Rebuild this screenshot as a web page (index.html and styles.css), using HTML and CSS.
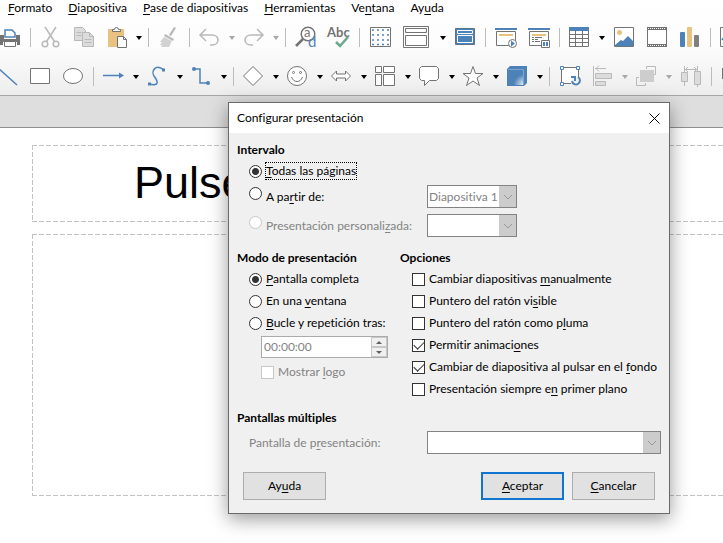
FILE: index.html
```
<!DOCTYPE html>
<html lang="es">
    <head>
        <meta charset="utf-8">
        <title>Configurar presentación</title>
        <link rel="stylesheet" href="styles.css">
    </head>
    <body>
    <header id="bars">
        <nav id="menubar">
            <a href="#"><u>F</u>ormato</a>
            <a href="#"><u>D</u>iapositiva</a>
            <a href="#"><u>P</u>ase de diapositivas</a>
            <a href="#"><u>H</u>erramientas</a>
            <a href="#">Ve<u>n</u>tana</a>
            <a href="#">Ay<u>u</u>da</a>
        </nav>
        <div id="toolbar-standard" class="toolbar">
            <button class="tool" aria-label="Imprimir"><svg viewBox="0 0 23 23"><path fill="#737373" d="M2 9h4v4h12V9h4v10h-3v-3H5v3H2z"/><path fill="#fff" stroke="#737373" d="M6.500 15.500h11v5h-11z"/><path fill="#fff" stroke="#4d82b8" stroke-width="1.500" d="M7 11V4h7l3 3v4z"/></svg></button>
            <span class="sep"></span>
            <button class="tool" aria-label="Cortar"><svg viewBox="0 0 23 23"><g fill="none" stroke="#b9b9b9" stroke-width="1.500"><path d="M6 1l9.500 14.500M17 1L7.500 15.500"/><circle cx="6" cy="18" r="2.800"/><circle cx="17" cy="18" r="2.800"/></g></svg></button>
            <button class="tool" aria-label="Copiar"><svg viewBox="0 0 23 23"><g fill="#dcdcdc" stroke="#b9b9b9"><path d="M2.500 1.500h8l3 3v10h-11z"/><path d="M10.500 6.500h7l4 4v10h-11z"/><path fill="none" d="M17.500 6.500v4h4M4.500 6.500h5M4.500 9.500h5M12.500 13.500h7M12.500 16.500h7"/></g></svg></button>
            <button class="tool" aria-label="Pegar"><svg viewBox="0 0 23 23"><path fill="#e8c27e" d="M3 3h16v18H3z"/><path fill="#fff" stroke="#737373" d="M7.500 5.500v-2h2a2 2 0 0 1 4 0h2v2z"/><path fill="#fff" stroke="#737373" d="M12.500 10.500h6l3 3v8h-9zM18.500 10.500v3h3"/></svg></button>
            <button class="drop" aria-label="Más"></button>
            <span class="sep"></span>
            <button class="tool" aria-label="Clonar formato"><svg viewBox="0 0 23 23"><path fill="#b9b9b9" d="M17 1l2 1-5 8-2-1zM8 8l9 5-1 2-9-5z"/><path fill="#d2d2d2" d="M7 11l8 4-3 6H4l1-2H3l2-3H3z"/></svg></button>
            <span class="sep"></span>
            <button class="tool" aria-label="Deshacer"><svg viewBox="0 0 23 23"><path fill="none" stroke="#b9b9b9" stroke-width="1.500" d="M8 3L2 9l6 6M2 9h12c8 0 8 10 0 10h-2"/></svg></button>
            <button class="drop off" aria-label="Más"></button>
            <button class="tool" aria-label="Rehacer"><svg viewBox="0 0 23 23"><path fill="none" stroke="#b9b9b9" stroke-width="1.500" d="M15 3l6 6-6 6M21 9H9c-8 0-8 10 0 10h2"/></svg></button>
            <button class="drop off" aria-label="Más"></button>
            <span class="sep"></span>
            <button class="tool" aria-label="Buscar y reemplazar"><svg viewBox="0 0 23 23"><circle cx="14" cy="8" r="6.800" fill="#fff" stroke="#737373" stroke-width="1.500"/><path stroke="#737373" stroke-width="2.500" d="M9 13l-7 7"/><text x="10" y="11" font-size="13" fill="#737373">a</text><text x="14" y="21" font-size="15" fill="#4d82b8">d</text></svg></button>
            <button class="tool" aria-label="Ortografía"><svg viewBox="0 0 23 23"><text x="0" y="11" font-size="13" font-weight="bold" fill="#737373">Abc</text><path fill="none" stroke="#69a78e" stroke-width="2.500" d="M9 16l4 4 8-9"/></svg></button>
            <span class="sep"></span>
            <button class="tool" aria-label="Cuadrícula"><svg viewBox="0 0 23 23"><path fill="#fff" stroke="#737373" d="M2.500 1.500h20v19h-20z"/><path stroke="#4d82b8" stroke-width="1.500" stroke-dasharray="2 3" d="M4 4h18M4 9h18M4 14h18M4 18.500h18"/></svg></button>
            <button class="tool wide" aria-label="Vistas"><svg viewBox="0 0 27 23"><path fill="#fff" stroke="#737373" d="M.5.500h25v21H.5zM2.500 2.500h21v4h-21zM2.500 9.500h21v10h-21z"/></svg></button>
            <button class="drop" aria-label="Más"></button>
            <button class="tool" aria-label="Patrón"><svg viewBox="0 0 23 23"><path fill="#4d82b8" stroke="#5f7286" d="M2.500 2.500h19v16h-19z"/><path fill="#4d82b8" stroke="#fff" d="M4.500 4.500h15v3h-15zM4.500 9.500h15v7h-15z"/></svg></button>
            <span class="sep"></span>
            <button class="tool" aria-label="Iniciar desde la primera"><svg viewBox="0 0 23 23"><path fill="#4d82b8" d="M1 2h22v2H1z"/><path fill="#fff" stroke="#737373" d="M2.500 5.500h19v14h-19z"/><path fill="#e8c27e" d="M5 8h14v2H5z"/><circle cx="18.500" cy="17.500" r="4" fill="#fff" stroke="#737373"/><path fill="#4d82b8" d="M17 14.500l4 3-4 3z"/></svg></button>
            <button class="tool" aria-label="Iniciar desde la actual"><svg viewBox="0 0 23 23"><path fill="#4d82b8" d="M1 2h22v2H1z"/><path fill="#fff" stroke="#737373" d="M2.500 5.500h19v14h-19z"/><path fill="#e8c27e" d="M5 8h14v2H5z"/><path stroke="#737373" stroke-dasharray="2 1 7 2" d="M5 11.500h10M5 13.500h6M5 15.500h8"/><path fill="#fff" stroke="#737373" d="M14.500 14.500h8v7h-8z"/><path fill="#4d82b8" d="M16 16h2v4h-2zM19 16h2v4h-2z"/></svg></button>
            <span class="sep"></span>
            <button class="tool" aria-label="Tabla"><svg viewBox="0 0 23 23"><path fill="#fff" stroke="#737373" d="M1.500 1.500h19v19h-19zM1.500 8.500h19M1.500 12.500h19M1.500 16.500h19M7.500 5v15M14.500 5v15"/><path fill="#4d82b8" d="M1 1h20v4H1z"/></svg></button>
            <button class="drop" aria-label="Más"></button>
            <button class="tool" aria-label="Imagen"><svg viewBox="0 0 23 23"><path fill="#fff" stroke="#737373" d="M2.500 1.500h19v19h-19z"/><circle cx="7.500" cy="6.500" r="2.500" fill="#e8c27e"/><path fill="#4d82b8" d="M3 19l6-5 2 1 5-5 5 5v5H3z"/></svg></button>
            <button class="tool" aria-label="Multimedia"><svg viewBox="0 0 23 23"><path fill="#fff" stroke="#737373" d="M2.500 1.500h19v19h-19z"/><path stroke="#737373" stroke-width="3" d="M2 2.500h20M2 19.500h20"/><path stroke="#fff" stroke-dasharray="1 1" d="M3 2.500h18M3 19.500h18"/></svg></button>
            <button class="tool" aria-label="Gráfico"><svg viewBox="0 0 23 23"><rect x="2" y="6" width="5" height="15" rx="1" fill="#4d82b8"/><rect x="9" y="1" width="5" height="20" rx="1" fill="#e8c27e"/><rect x="16" y="9" width="5" height="12" rx="1" fill="#808080"/></svg></button>
            <span class="sep"></span>
            <button class="tool" aria-label="Cuadro de texto"><svg viewBox="0 0 23 23"><path fill="#fff" stroke="#737373" d="M1.500 1.500h19v19h-19z"/><path stroke="#4d82b8" stroke-width="2" d="M3 14l4-5"/></svg></button>
        </div>
        <div id="toolbar-drawing" class="toolbar">
            <button class="tool" aria-label="Línea"><svg viewBox="0 0 23 23"><path stroke="#4d82b8" stroke-width="1.500" d="M2 2l20 18"/></svg></button>
            <button class="tool" aria-label="Rectángulo"><svg viewBox="0 0 23 23"><path fill="#fff" stroke="#737373" d="M2.500 3.500h19v15h-19z"/></svg></button>
            <button class="tool" aria-label="Elipse"><svg viewBox="0 0 23 23"><ellipse cx="12" cy="11" rx="9.500" ry="7.500" fill="#fff" stroke="#737373"/></svg></button>
            <span class="sep"></span>
            <button class="tool" aria-label="Flecha"><svg viewBox="0 0 23 23"><path stroke="#4d82b8" stroke-width="1.500" d="M1 10.500h18"/><path fill="#4d82b8" d="M17 7.500l5 3-5 3z"/></svg></button>
            <button class="drop" aria-label="Más"></button>
            <button class="tool" aria-label="Curva"><svg viewBox="0 0 23 23"><path fill="none" stroke="#4d82b8" stroke-width="1.500" d="M3 19c12 3 8-4 5-8S9-2 18 5"/><path fill="#4d82b8" d="M2 17.500h3v3H2zM16 3.500h3v3h-3z"/></svg></button>
            <button class="drop" aria-label="Más"></button>
            <button class="tool" aria-label="Conector"><svg viewBox="0 0 23 23"><path fill="none" stroke="#4d82b8" stroke-width="1.500" d="M4 4h6v14h8"/><circle cx="4" cy="4" r="2" fill="#4d82b8"/><circle cx="18" cy="18" r="2" fill="#4d82b8"/></svg></button>
            <button class="drop" aria-label="Más"></button>
            <span class="sep"></span>
            <button class="tool" aria-label="Formas básicas"><svg viewBox="0 0 23 23"><path fill="#fff" stroke="#737373" d="M11 1.500l9.500 9.500-9.500 9.500L1.500 11z"/></svg></button>
            <button class="drop" aria-label="Más"></button>
            <button class="tool" aria-label="Símbolos"><svg viewBox="0 0 23 23"><g fill="#fff" stroke="#737373"><circle cx="11" cy="11" r="9.500"/><circle cx="7.500" cy="7.500" r="1"/><circle cx="14.500" cy="7.500" r="1"/><path d="M5.500 12c2 6 9 6 11 0"/></g></svg></button>
            <button class="drop" aria-label="Más"></button>
            <button class="tool" aria-label="Flechas de bloque"><svg viewBox="0 0 23 23"><path fill="#fff" stroke="#737373" d="M1.500 11l5-5v3h9V6l5 5-5 5v-3h-9v3z"/></svg></button>
            <button class="drop" aria-label="Más"></button>
            <button class="tool" aria-label="Diagrama de flujo"><svg viewBox="0 0 23 23"><path fill="#fff" stroke="#737373" d="M1.500 1.500h6v6h-6zM9.500 1.500h11v6h-11zM1.500 9.500h6v11h-6zM9.500 9.500h11v11h-11z"/></svg></button>
            <button class="drop" aria-label="Más"></button>
            <button class="tool" aria-label="Llamadas"><svg viewBox="0 0 23 23"><path fill="#fff" stroke="#737373" d="M3.500 1.500h15l2 2v10l-2 2h-7l-5 5v-5h-3l-2-2v-10z"/></svg></button>
            <button class="drop" aria-label="Más"></button>
            <button class="tool" aria-label="Estrellas"><svg viewBox="0 0 23 23"><path fill="#fff" stroke="#737373" d="M11 1.500l2.500 7h7.500l-6 4.500 2.500 7.500-6.500-4.500-6.500 4.500L7 13 1 8.500h7.500z"/></svg></button>
            <button class="drop" aria-label="Más"></button>
            <button class="tool" aria-label="Objetos 3D"><svg viewBox="0 0 23 23"><defs><radialGradient id="shine" cx="1" cy="1" r=".7"><stop offset="0" stop-color="#eef3f8"/><stop offset="1" stop-color="#4d82b8"/></radialGradient></defs><path fill="#4d82b8" d="M1 4l3-3h17v17l-3 3H1z"/><path fill="url(#shine)" d="M3 5h15v15H3z"/><path fill="none" stroke="#7fa5cc" d="M2 4.500h15.500V20"/></svg></button>
            <button class="drop" aria-label="Más"></button>
            <span class="sep"></span>
            <button class="tool" aria-label="Girar"><svg viewBox="0 0 23 23"><path fill="#fff" stroke="#737373" d="M3.500 2.500h17v16h-17z"/><g fill="#fff" stroke="#4d82b8"><path d="M2.500 1.500h3v3h-3zM18.500 1.500h3v3h-3zM2.500 17.500h3v3h-3z"/></g><path stroke="#f4f4f4" stroke-width="9" d="M13 16.500h10"/><path fill="none" stroke="#4d82b8" stroke-width="2" d="M20 12a4 4 0 1 1-6 4M13 12h4v4"/></svg></button>
            <button class="tool" aria-label="Alinear"><svg viewBox="0 0 23 23"><g fill="#dcdcdc" stroke="#b9b9b9"><path d="M2.500 1v20M4.500 8.500h16v5h-16zM4.500 16.500h10v4h-10z"/><path fill="none" d="M15 3.500H4M8 .5l-3 3 3 3"/></g></svg></button>
            <button class="drop off" aria-label="Más"></button>
            <button class="tool" aria-label="Organizar"><svg viewBox="0 0 23 23"><path fill="#cdcdcd" d="M5 5h14v12H5z"/><path fill="none" stroke="#b9b9b9" d="M11.500 4V1.500h9v8H19M4 12.500H1.500v8h9V18"/></svg></button>
            <button class="drop off" aria-label="Más"></button>
            <button class="tool" aria-label="Distribuir"><svg viewBox="0 0 23 23"><g fill="#dcdcdc" stroke="#b9b9b9"><path d="M2.500 7.500h6v9h-6zM15.500 6.500h6v13h-6zM5.500 1v6M5.500 17v4M18.500 1v5M18.500 20v2"/><path fill="none" d="M6 4.500h12M9 2L6.500 4.500 9 7M15 2l2.500 2.500L15 7"/></g></svg></button>
            <span class="sep"></span>
            <button class="tool" aria-label="Sombra"><svg viewBox="0 0 23 23"><path fill="#737373" d="M2 3h16v11H2z"/></svg></button>
        </div>
    </header>
    <div id="ruler"></div>
    <main id="slide">
        <div class="frame frame-title">Pulse</div>
        <div class="frame frame-content"></div>
    </main>

    <div id="dialog" role="dialog" aria-labelledby="dialog-title">
        <div class="titlebar">
            <span id="dialog-title">Configurar presentación</span>
            <button class="close" aria-label="Cerrar"><svg width="11" height="11" viewBox="0 0 11 11"><path stroke="#000" d="M.5.500l10 10M10.500.500l-10 10"/></svg></button>
        </div>
        <form class="dialog-body" action="javascript:void(0);">
            <h2>Intervalo</h2>
            <div class="row">
                <input type="radio" name="range" id="all" checked>
                <label for="all" class="focused"><u>T</u>odas las páginas</label>
            </div>
            <div class="row tall">
                <input type="radio" name="range" id="from">
                <label for="from">A pa<u>r</u>tir de:</label>
                <span class="combo">
                    <select aria-label="Diapositiva inicial" disabled><option>Diapositiva 1</option></select>
                    <svg viewBox="0 0 17 21"><path d="M5 9l4 4 4-4"/></svg>
                </span>
            </div>
            <div class="row tall">
                <input type="radio" name="range" id="custom" disabled>
                <label for="custom">Presentación personali<u>z</u>ada:</label>
                <span class="combo">
                    <select aria-label="Presentación personalizada" disabled></select>
                    <svg viewBox="0 0 17 21"><path d="M5 9l4 4 4-4"/></svg>
                </span>
            </div>
            <div class="columns">
                <section>
                    <h2>Modo de presentación</h2>
                    <div class="row"><input type="radio" name="mode" id="full" checked><label for="full"><u>P</u>antalla completa</label></div>
                    <div class="row"><input type="radio" name="mode" id="window"><label for="window">En una <u>v</u>entana</label></div>
                    <div class="row"><input type="radio" name="mode" id="loop"><label for="loop"><u>B</u>ucle y repetición tras:</label></div>
                    <div class="spin">
                        <input type="text" value="00:00:00" aria-label="Duración de la pausa" disabled>
                        <span class="spin-buttons">
                            <button type="button" aria-label="Aumentar" disabled><svg width="6" height="3" viewBox="0 0 6 3"><path d="M0 3l3-3 3 3z"/></svg></button>
                            <button type="button" aria-label="Disminuir" disabled><svg width="6" height="3" viewBox="0 0 6 3"><path d="M0 0l3 3 3-3z"/></svg></button>
                        </span>
                    </div>
                    <div class="row indent"><input type="checkbox" id="logo" disabled><label for="logo">Mostrar <u>l</u>ogo</label></div>
                </section>
                <section>
                    <h2>Opciones</h2>
                    <div class="row"><input type="checkbox" id="manual"><label for="manual">Cambiar diapositivas <u>m</u>anualmente</label></div>
                    <div class="row"><input type="checkbox" id="pointer"><label for="pointer">Puntero del ratón vi<u>s</u>ible</label></div>
                    <div class="row"><input type="checkbox" id="pen"><label for="pen">Puntero del ratón como p<u>l</u>uma</label></div>
                    <div class="row"><input type="checkbox" id="animations" checked><label for="animations">Permitir animaci<u>o</u>nes</label></div>
                    <div class="row"><input type="checkbox" id="click" checked><label for="click">Cambiar de diapositiva al pulsar en el <u>f</u>ondo</label></div>
                    <div class="row"><input type="checkbox" id="ontop"><label for="ontop">Presentación siempre e<u>n</u> primer plano</label></div>
                </section>
            </div>
            <h2>Pantallas múltiples</h2>
            <div class="row tall">
                <label for="display" class="disabled">Pantalla de p<u>r</u>esentación:</label>
                <span class="combo combo-wide">
                    <select id="display" disabled></select>
                    <svg viewBox="0 0 17 21"><path d="M5 9l4 4 4-4"/></svg>
                </span>
            </div>
            <div class="buttons">
                <button type="button" class="help">Ay<u>u</u>da</button>
                <button type="submit" class="default"><u>A</u>ceptar</button>
                <button type="button"><u>C</u>ancelar</button>
            </div>
        </form>
    </div>
    </body>
</html>
```
FILE: styles.css
```
* {
    box-sizing: border-box;
}
body {
    display: flex;
    flex-direction: column;
    min-height: 100vh;
    margin: 0;
    overflow: hidden;
    background-color: #fff;
    color: #000;
    font: 12px/16px Lato, "Open Sans", sans-serif;
    font-variant-ligatures: none;
}
button, input, select {
    font: inherit;
    font-variant-ligatures: none;
    color: inherit;
    margin: 0;
    padding: 0;
}
u {
    text-underline-offset: 2px;
}

/* menu and toolbars */
#bars {
    height: 96px;
    background: linear-gradient(#fff, #fcfcfc 50%, #ededed);
    border-bottom: 1px solid #a6a6a6;
}
#menubar {
    display: flex;
    gap: 16px;
    height: 18px;
    padding: 0 8px;
    line-height: 15px;
    white-space: nowrap;
}
#menubar a {
    color: #000;
    text-decoration: none;
}
.toolbar {
    display: flex;
    align-items: center;
    height: 39px;
    overflow: hidden;
}
#toolbar-standard {
    margin-left: -7px;
}
#toolbar-drawing {
    margin-left: -10px;
}
.tool, .drop {
    display: flex;
    flex: none;
    align-items: center;
    justify-content: center;
    width: 33px;
    height: 33px;
    border: 0;
    background: none;
}
.tool svg {
    width: 23px;
    height: 23px;
    overflow: visible;
}
.tool.wide {
    width: 41px;
}
.tool.wide svg {
    width: 27px;
}
.drop {
    width: 11px;
}
.drop::after {
    content: "";
    border: 3px solid transparent;
    border-top: 4px solid #000;
    border-bottom: 0;
}
.drop.off::after {
    border-top-color: #a8a8a8;
}
.sep {
    flex: none;
    width: 8px;
    height: 19px;
    background: linear-gradient(#bdbdbd, #bdbdbd) 4px 0 / 1px 100% no-repeat;
}

/* slide */
#ruler {
    height: 32px;
    background-color: #dedede;
    border-bottom: 1px solid #8f8f8f;
}
#slide {
    display: flex;
    flex: 1;
    flex-direction: column;
    gap: 12px;
    padding: 17px 0 47px 32px;
}
.frame {
    background:
        repeating-linear-gradient(90deg, #c3c3c3 0 5px, transparent 5px 7px) top / 100% 1px no-repeat,
        repeating-linear-gradient(90deg, #c3c3c3 0 5px, transparent 5px 7px) bottom / 100% 1px no-repeat,
        repeating-linear-gradient(#c3c3c3 0 5px, transparent 5px 7px) left / 1px 100% no-repeat;
}
.frame-title {
    height: 77px;
    padding-left: 102px;
    font: 45px/75px "Liberation Sans", Arial, sans-serif;
}
.frame-content {
    flex: 1;
}

/* dialog */
#dialog {
    position: absolute;
    top: 102px;
    left: 228px;
    width: 442px;
    background-color: #f0f0f0;
    border: 1px solid #6a6a6a;
    box-shadow: 0 5px 18px rgba(0, 0, 0, 0.4);
}
.titlebar {
    display: flex;
    align-items: center;
    justify-content: space-between;
    height: 30px;
    padding: 0 9px 0 8px;
    background-color: #fff;
}
.close {
    display: flex;
    border: 0;
    background: none;
}
.dialog-body {
    padding: 7px 8px 13px;
}
h2 {
    margin: 0;
    font-size: 12px;
    line-height: 20px;
}
.row {
    display: flex;
    align-items: center;
    gap: 4px;
    height: 22px;
    padding-left: 12px;
    white-space: nowrap;
}
.row.tall {
    height: 29px;
}
.row.tall input {
    margin-bottom: 7px;
}
.row.indent {
    height: 28px;
    padding-left: 24px;
}
.columns {
    display: grid;
    grid-template-columns: 163px 1fr;
    margin: 8px 0;
}
.focused {
    outline: 1px dotted #000;
}
input[type="radio"], input[type="checkbox"] {
    flex: none;
    appearance: none;
    width: 13px;
    height: 13px;
    border: 1px solid #333;
    background-color: #fff;
}
input[type="radio"] {
    border-radius: 50%;
}
input[type="radio"]:checked {
    background: radial-gradient(circle, #333 3px, #fff 4px);
}
input[type="checkbox"]:checked {
    display: grid;
    place-items: center;
}
input[type="checkbox"]:checked::after {
    content: "";
    width: 9px;
    height: 5px;
    margin-bottom: 3px;
    border: solid #333;
    border-width: 0 0 1px 1px;
    transform: rotate(-45deg);
}
input:disabled {
    border-color: #c8c8c8;
}
input:disabled + label, .disabled {
    color: #838383;
}
.combo {
    display: flex;
    width: 90px;
    height: 23px;
    margin-left: auto;
    margin-right: 144px;
    border: 1px solid #838383;
    background-color: #fff;
}
.combo select {
    flex: 1;
    min-width: 0;
    padding-left: 1px;
    appearance: none;
    border: 0;
    background: none;
    color: #838383;
    opacity: 1;
}
.combo svg {
    flex: none;
    width: 17px;
    height: 21px;
    background-color: #ccc;
    fill: none;
    stroke: #999;
}
.combo-wide {
    width: 234px;
    margin-right: 0;
}
.spin {
    display: flex;
    width: 127px;
    height: 22px;
    margin: 2px 0 0 24px;
    border: 1px solid #ababab;
    background-color: #fff;
}
.spin input {
    flex: 1;
    min-width: 0;
    padding-left: 2px;
    border: 0;
    background: none;
    color: #838383;
}
.spin-buttons {
    display: flex;
    flex-direction: column;
    width: 16px;
}
.spin-buttons button {
    display: flex;
    flex: 1;
    align-items: center;
    justify-content: center;
    border: 1px solid #c8c8c8;
    background-color: #f0f0f0;
    fill: #606060;
}
.buttons {
    display: flex;
    gap: 8px;
    padding: 15px 6px 0;
}
.buttons button {
    width: 83px;
    height: 28px;
    border: 1px solid #adadad;
    background-color: #e1e1e1;
}
.buttons .help {
    margin-right: auto;
}
.buttons .default {
    border: 2px solid #0f75d0;
}
```
